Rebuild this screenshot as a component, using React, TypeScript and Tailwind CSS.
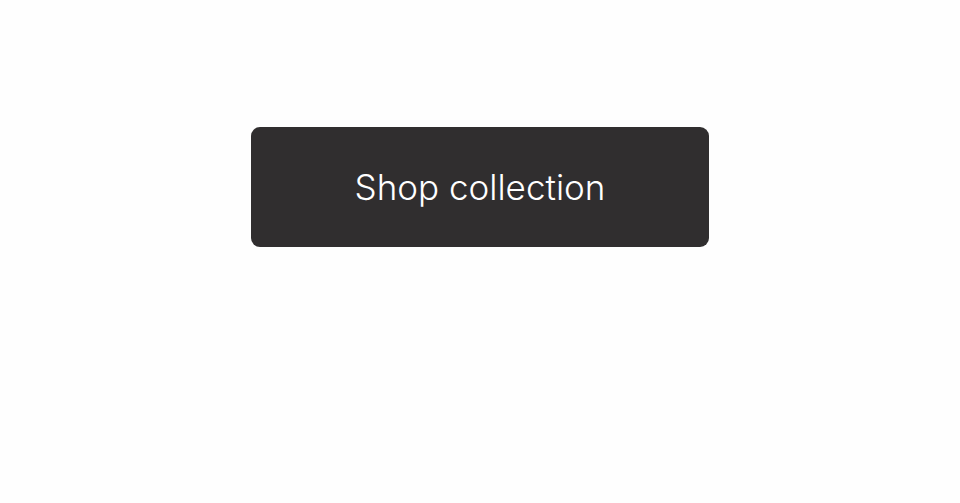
import React from 'react';

const App = () => {
  return (
    <div className="min-h-screen w-full bg-[#fefefe] flex justify-center pt-[127px]">
      <button
        className="w-[458px] h-[120px] rounded-[9px] bg-[#302e2f] text-white text-[35px] font-light flex items-center justify-center"
        style={{ fontFamily: 'Inter, "Liberation Sans", sans-serif' }}
      >
        Shop collection
      </button>
    </div>
  );
};

export default App;
